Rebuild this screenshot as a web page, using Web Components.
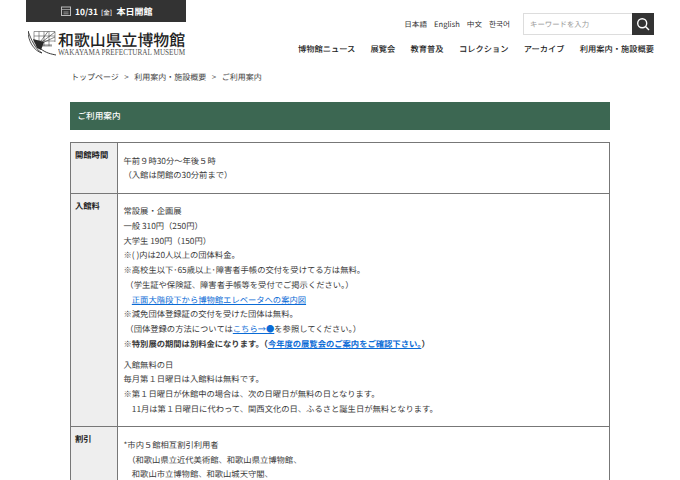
<!DOCTYPE html>
<html lang="ja">
<head>
<meta charset="utf-8">
<title>ご利用案内</title>
<style>
  html, body { margin: 0; background: #fff; overflow: hidden; height: 480px; }
  body { font-family: "Noto Sans CJK JP", sans-serif; color: #3a3a3a; font-size: 8.3px; text-rendering: geometricPrecision; }
  info-row p { margin: 0; }
  info-row p + p { margin-top: 6px; }
  info-row a { color: #0a6bd6; text-decoration: underline; }
</style>
</head>
<body>
<site-header></site-header>
<bread-crumb></bread-crumb>
<page-title>ご利用案内</page-title>
<info-table>
  <info-row label="開館時間">
    <p>午前９時30分～年後５時<br>（入館は閉館の30分前まで）</p>
  </info-row>
  <info-row label="入館料">
    <p>常設展・企画展<br>一般 310円（250円）<br>大学生 190円（150円）<br>※( )内は20人以上の団体料金。<br>※高校生以下･65歳以上･障害者手帳の交付を受けてる方は無料。<br>&nbsp;（学生証や保険証、障害者手帳等を受付でご掲示ください。）<br>&emsp;<a>正面大階段下から博物館エレベータへの案内図</a><br>※減免団体登録証の交付を受けた団体は無料。<br>&nbsp;（団体登録の方法については<a>こちら→●</a>を参照してください。）<br><b>※特別展の期間は別料金になります。（<a>今年度の展覧会のご案内をご確認下さい。</a>）</b></p>
    <p>入館無料の日<br>毎月第１日曜日は入館料は無料です。<br>※第１日曜日が休館中の場合は、次の日曜日が無料の日となります。<br>&emsp;11月は第１日曜日に代わって、関西文化の日、ふるさと誕生日が無料となります。</p>
  </info-row>
  <info-row label="割引">
    <p>*市内５館相互割引利用者<br>&nbsp;&nbsp;（和歌山県立近代美術館、和歌山県立博物館、<br>&emsp;和歌山市立博物館、和歌山城天守閣、</p>
  </info-row>
</info-table>

<script>
class SiteHeader extends HTMLElement {
  constructor() {
    super();
    this.shadow = this.attachShadow({ mode: "open" });
  }

  connectedCallback() {
    this.shadow.innerHTML = `
      <style>
        :host { display: flex; justify-content: space-between; height: 64px; padding: 0 26px; font-family: "Noto Sans CJK JP", sans-serif; }
        .left { display: flex; flex-direction: column; width: 160px; }
        .today { height: 22px; background: #333; color: #fff; display: flex; align-items: center; padding-left: 35px; gap: 4px; font-size: 9px; font-weight: 700; white-space: nowrap; }
        .today svg { display: block; flex: none; }
        .today .date { font-size: 8.4px; }
        .today small { font-size: 6.5px; font-weight: 500; margin: 0 3px 0 1.500px; }
        .logo { display: flex; margin: 9px 0 0 2px; color: #222; }
        .logo svg { flex: none; display: block; }
        .names { margin-left: 2px; }
        .jp { font-size: 15.9px; line-height: 18px; font-weight: 500; white-space: nowrap; }
        .en { font-family: "Liberation Serif", serif; font-size: 9px; line-height: 7px; color: #555; white-space: nowrap; transform: scaleX(.8); transform-origin: left; }
        .right { display: flex; flex-direction: column; align-items: flex-end; padding-top: 13px; }
        .tools { display: flex; align-items: center; gap: 13px; }
        .langs { display: flex; gap: 7px; font-size: 7.6px; color: #333; }
        .search { display: flex; width: 131px; height: 22px; box-sizing: border-box; }
        .box { flex: 1; border: 1px solid #ddd; border-right: 0; font-size: 7.4px; color: #999; display: flex; align-items: center; padding-left: 6px; }
        .btn { width: 22px; background: #333; display: flex; align-items: center; justify-content: center; }
        nav { display: flex; gap: 15.3px; margin-top: 8px; font-size: 8.25px; font-weight: 500; color: #222; }
      </style>
      <div class="left">
        <div class="today">
          <svg width="10" height="10" viewBox="0 0 10 10" fill="none" stroke="#bbb"><rect x=".5" y="1" width="9" height="8.500"/><path d="M1 3.500h8M2.500 6h5M2.500 7.800h5" stroke-width=".7"/></svg>
          <span><span class="date">10/31</span><small> [金] </small>本日開館</span>
        </div>
        <div class="logo">
          <svg width="28" height="25" viewBox="0 0 28 25" fill="none" stroke="#555" stroke-width=".6">
            <path d="M6 .5H27M6 5H27M6 10H27M6 15H24M6 .5V14M11 .5V15M16 .5V15M21 .5V15M27 .5V11"/>
            <path d="M10 14L27 1M10 14L27 6M10 14L20 .5M10 14L24 14" stroke="#333"/>
            <path d="M0 0C3 8 7 18 14 22C6 20 0 10 0 0Z" fill="#fff" stroke="#222" stroke-width=".8"/>
            <path d="M5 8L16 11L13 19L9 17Z" fill="#2a2a2a" stroke="none"/>
            <path d="M13 18C18 22 23 23 28 24" stroke="#222" stroke-width=".9"/>
          </svg>
          <div class="names">
            <div class="jp">和歌山県立博物館</div>
            <div class="en">WAKAYAMA PREFECTURAL MUSEUM</div>
          </div>
        </div>
      </div>
      <div class="right">
        <div class="tools">
          <div class="langs"><span>日本語</span><span>English</span><span>中文</span><span style="font-family:'Noto Sans CJK KR',sans-serif">한국어</span></div>
          <div class="search">
            <div class="box">キーワードを入力</div>
            <div class="btn"><svg width="14" height="14" viewBox="0 0 14 14" fill="none" stroke="#fff" stroke-width="1.400"><circle cx="6.200" cy="6.200" r="4.500"/><path d="M9.500 9.500L13 13"/></svg></div>
          </div>
        </div>
        <nav><span>博物館ニュース</span><span>展覧会</span><span>教育普及</span><span>コレクション</span><span>アーカイブ</span><span>利用案内・施設概要</span></nav>
      </div>
    `;
  }
}

class BreadCrumb extends HTMLElement {
  constructor() {
    super();
    this.shadow = this.attachShadow({ mode: "open" });
  }

  connectedCallback() {
    this.shadow.innerHTML = `
      <style>
        :host { display: flex; gap: 5.500px; margin: 6px 70px 0 71px; height: 32px; font-size: 8px; color: #444; line-height: 16px; }
      </style>
      <span>トップページ</span><span>&gt;</span><span>利用案内・施設概要</span><span>&gt;</span><span>ご利用案内</span>
    `;
  }
}

class PageTitle extends HTMLElement {
  constructor() {
    super();
    this.shadow = this.attachShadow({ mode: "open" });
  }

  connectedCallback() {
    this.shadow.innerHTML = `
      <style>
        :host { display: flex; align-items: center; height: 28px; margin: 0 70px; padding-left: 7.500px; background: #3c6752; color: #fff; font-size: 8.6px; font-weight: 500; }
      </style>
      <slot></slot>
    `;
  }
}

class InfoTable extends HTMLElement {
  constructor() {
    super();
    this.shadow = this.attachShadow({ mode: "open" });
  }

  connectedCallback() {
    this.shadow.innerHTML = `
      <style>
        :host { display: block; margin: 12px 70px 0; border: solid #777; border-width: 1px 1px 0; }
      </style>
      <slot></slot>
    `;
  }
}

class InfoRow extends HTMLElement {
  constructor() {
    super();
    this.shadow = this.attachShadow({ mode: "open" });
  }

  connectedCallback() {
    this.shadow.innerHTML = `
      <style>
        :host { display: grid; grid-template-columns: 47px 1fr; border-bottom: 1px solid #777; }
        .label { background: #eee; border-right: 1px solid #777; padding: 5px 4px; font-weight: 700; line-height: 14.770px; color: #222; }
        .body { padding: 10.500px 5.500px 9.500px; line-height: 14.770px; }
      </style>
      <div class="label">${this.getAttribute("label")}</div>
      <div class="body"><slot></slot></div>
    `;
  }
}

customElements.define("site-header", SiteHeader);
customElements.define("bread-crumb", BreadCrumb);
customElements.define("page-title", PageTitle);
customElements.define("info-table", InfoTable);
customElements.define("info-row", InfoRow);
</script>
</body>
</html>
